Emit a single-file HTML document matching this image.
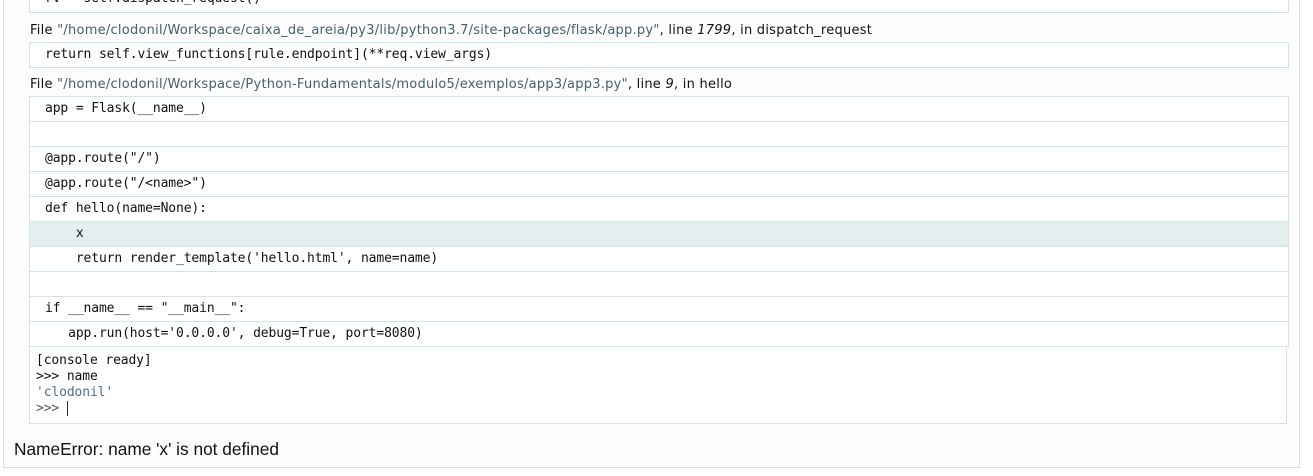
<!DOCTYPE html>
<html><head><meta charset="utf-8"><style>
body{margin:0;background:#fff;width:1313px;height:476px;overflow:hidden;font-family:"Liberation Sans","DejaVu Sans",sans-serif;}
.outer{position:absolute;left:3px;top:-10px;width:1295px;height:477px;border:1px solid #ddd;border-top:none;background:#fdfdfd;}
.box{position:absolute;left:29px;width:1258px;border:1px solid #cde3e6;background:#fff;}
.row{height:24px;border-bottom:1px solid #cde3e6;font:13px "DejaVu Sans Mono",monospace;letter-spacing:-0.12px;line-height:24px;color:#111;padding-left:15px;white-space:pre;box-sizing:content-box;}
.row:last-child{border-bottom:none}
.hl{background:#e5eeee}
.file{position:absolute;left:30px;font-family:"DejaVu Sans",sans-serif;font-size:13px;letter-spacing:0.25px;color:#111;}
.file .p{color:#44606e}
.cons{position:absolute;left:29px;top:348px;width:1258px;height:76px;border:1px solid #cde3e6;border-top:none;background:#fff;font:13px "DejaVu Sans Mono",monospace;letter-spacing:-0.12px;line-height:16px;padding:5px 6px;box-sizing:border-box;white-space:pre;color:#111}
</style></head><body>
<div class="outer"></div>
<div class="box" style="top:-14px;height:25px"><div class="row">rv = self.dispatch_request()</div></div>
<div class="file" style="top:23px">File <span class="p">"/home/clodonil/Workspace/caixa_de_areia/py3/lib/python3.7/site-packages/flask/app.py"</span>, line <i>1799</i>, in dispatch_request</div>
<div class="box" style="top:42px"><div class="row">return self.view_functions[rule.endpoint](**req.view_args)</div></div>
<div class="file" style="top:77px">File <span class="p">"/home/clodonil/Workspace/Python-Fundamentals/modulo5/exemplos/app3/app3.py"</span>, line <i>9</i>, in hello</div>
<div class="box" style="top:96px">
<div class="row">app = Flask(__name__)</div>
<div class="row"> </div>
<div class="row">@app.route("/")</div>
<div class="row">@app.route("/&lt;name&gt;")</div>
<div class="row">def hello(name=None):</div>
<div class="row hl">    x</div>
<div class="row">    return render_template('hello.html', name=name)</div>
<div class="row"> </div>
<div class="row">if __name__ == "__main__":</div>
<div class="row">   app.run(host='0.0.0.0', debug=True, port=8080)</div>
</div>
<div class="cons">[console ready]
&gt;&gt;&gt; name
<span style="color:#4d6d94">'clodonil'</span>
<span style="color:#555">&gt;&gt;&gt; </span><span style="border-left:1px solid #333"> </span></div>
<div style="position:absolute;left:14px;top:439px;font-size:17.3px;color:#111">NameError: name 'x' is not defined</div>
</body></html>
